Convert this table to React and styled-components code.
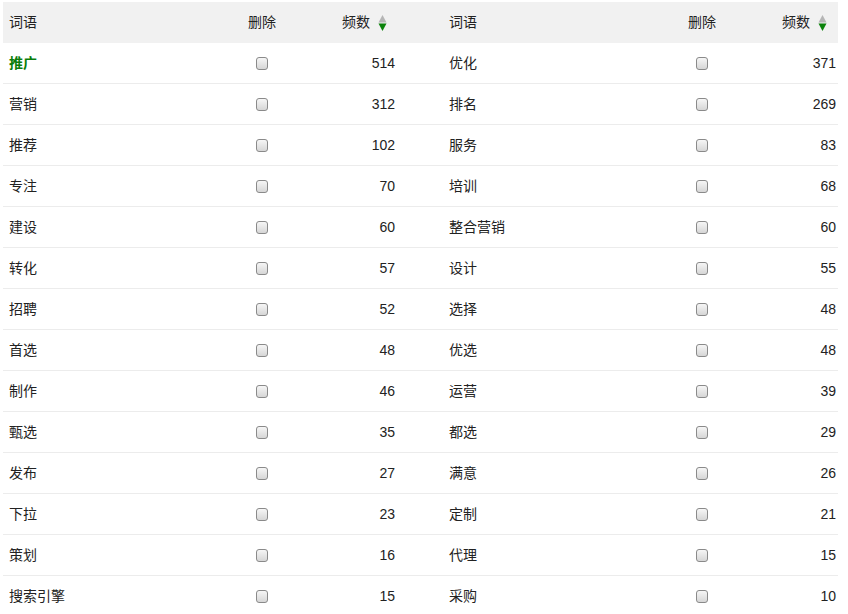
import React from "react";
import styled, { createGlobalStyle } from "styled-components";

const GlobalStyle = createGlobalStyle`
    html, body {
        margin: 0;
        padding: 0;
        overflow: hidden;
        background: #fff;
    }
    body {
        font-family: "Liberation Sans", "Noto Sans CJK SC", sans-serif;
        font-size: 14px;
        color: #222;
    }
`;

const Table = styled.div`
    width: 835px;
    margin: 2px 0 0 3px;
`;

const Row = styled.div`
    display: grid;
    grid-template-columns: 200px 118px 122px 200px 118px 77px;
    height: 41px;
    align-items: center;
    background: ${(p) => (p.head ? "#f1f1f1" : "#fff")};
    border-bottom: ${(p) => (p.head ? "none" : "1px solid #ececec")};
    box-sizing: border-box;
`;

const Word = styled.div`
    padding-left: 6px;
    font-family: "Noto Sans CJK SC", sans-serif;
    line-height: 20px;
    margin-top: -3px;
    color: ${(p) => (p.hot ? "#0a7d0a" : "#222")};
    font-weight: ${(p) => (p.hot ? "bold" : "normal")};
`;

const Center = styled.div`
    display: flex;
    justify-content: center;
    font-family: "Noto Sans CJK SC", sans-serif;
    line-height: 20px;
    margin-top: ${(p) => (p.text ? "-3px" : "0")};
`;

const Num = styled.div`
    text-align: right;
    line-height: 20px;
    margin-top: -1px;
    padding-right: ${(p) => p.pr}px;
`;

const HeadNum = styled.div`
    display: flex;
    justify-content: flex-end;
    align-items: center;
    gap: 8px;
    font-family: "Noto Sans CJK SC", sans-serif;
    line-height: 20px;
    padding-right: ${(p) => p.pr}px;
    span {
        margin-top: -3px;
    }
`;

const Check = styled.input`
    appearance: none;
    -webkit-appearance: none;
    width: 12px;
    height: 13px;
    margin: 0;
    border: 1px solid #8a8a8a;
    border-radius: 3px;
    background: linear-gradient(#f6f6f6, #d6d6d6);
    box-sizing: border-box;
`;

const SortIcon = () => (
    <svg width="9" height="16" viewBox="0 0 9 16">
        <polygon points="4.5,0 8.5,7.5 0.5,7.5" fill="#b5b5b5" />
        <polygon points="0.5,8.5 8.5,8.5 4.5,16" fill="#0b820b" />
    </svg>
);

const left = [
    ["推广", 514], ["营销", 312], ["推荐", 102], ["专注", 70], ["建设", 60],
    ["转化", 57], ["招聘", 52], ["首选", 48], ["制作", 46], ["甄选", 35],
    ["发布", 27], ["下拉", 23], ["策划", 16], ["搜索引擎", 15],
];

const right = [
    ["优化", 371], ["排名", 269], ["服务", 83], ["培训", 68], ["整合营销", 60],
    ["设计", 55], ["选择", 48], ["优选", 48], ["运营", 39], ["都选", 29],
    ["满意", 26], ["定制", 21], ["代理", 15], ["采购", 10],
];

export default function App() {
    return (
        <>
            <GlobalStyle />
            <Table>
                <Row head>
                    <Word>词语</Word>
                    <Center text>删除</Center>
                    <HeadNum pr={56}><span>频数</span><SortIcon /></HeadNum>
                    <Word>词语</Word>
                    <Center text>删除</Center>
                    <HeadNum pr={11}><span>频数</span><SortIcon /></HeadNum>
                </Row>
                {left.map(([w, n], i) => (
                    <Row key={w}>
                        <Word hot={i === 0}>{w}</Word>
                        <Center><Check type="checkbox" /></Center>
                        <Num pr={48}>{n}</Num>
                        <Word>{right[i][0]}</Word>
                        <Center><Check type="checkbox" /></Center>
                        <Num pr={2}>{right[i][1]}</Num>
                    </Row>
                ))}
            </Table>
        </>
    );
}
